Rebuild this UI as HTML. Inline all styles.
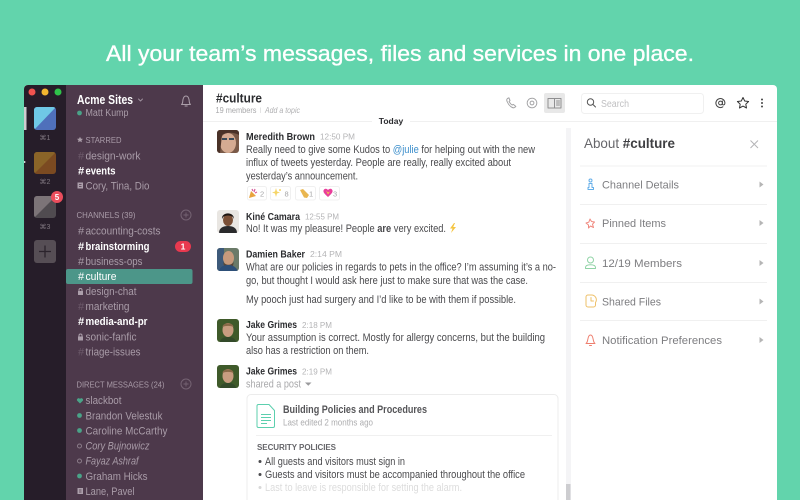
<!DOCTYPE html>
<html><head><meta charset="utf-8"><title>Slack</title>
<style>
html,body{margin:0;padding:0;width:800px;height:500px;overflow:hidden;background:#62d4ac}
svg{display:block;filter:blur(.3px)}
text{font-family:"Liberation Sans",sans-serif}
.h{font-size:22.500px;font-weight:400;fill:#fff;stroke:#fff;stroke-width:.35}
.s{font-size:11px;fill:#a99ca8}
.sb{font-size:11px;font-weight:700;fill:#fff}
.hd{font-size:8.500px;fill:#a99ba8}
.n{font-size:10.500px;font-weight:700;fill:#2c2d30}
.tm{font-size:8.500px;fill:#b4b4b6}
.b{font-size:11px;fill:#4a4a4d}
.r{font-size:11px;fill:#7d7d80}
.ar{fill:#b5b5b5}
.ln{stroke:#f0f0f0;stroke-width:1}
.ic{fill:none;stroke-width:1;stroke-linecap:round;stroke-linejoin:round}
</style></head><body>
<svg width="800" height="500" viewBox="0 0 800 500" xmlns="http://www.w3.org/2000/svg">
<defs>
<clipPath id="win"><path d="M28 85H773a4 4 0 0 1 4 4V500H24V89a4 4 0 0 1 4-4z"/></clipPath>
<clipPath id="av1"><rect x="217" y="130" width="22" height="23" rx="3"/></clipPath>
<clipPath id="av2"><rect x="217" y="210" width="22" height="23" rx="3"/></clipPath>
<clipPath id="av3"><rect x="217" y="248" width="22" height="23" rx="3"/></clipPath>
<clipPath id="av4"><rect x="217" y="319" width="22" height="23" rx="3"/></clipPath>
<clipPath id="av5"><rect x="217" y="365" width="22" height="23" rx="3"/></clipPath>
<clipPath id="t1"><rect x="34" y="107" width="22" height="23" rx="3"/></clipPath>
<clipPath id="t2"><rect x="34" y="152" width="22" height="22" rx="3"/></clipPath>
<clipPath id="t3"><rect x="34" y="196" width="22" height="22" rx="3"/></clipPath>
</defs>

<rect width="800" height="500" fill="#62d4ac"/>
<text class="h" x="106" y="61" textLength="588" lengthAdjust="spacingAndGlyphs">All your team’s messages, files and services in one place.</text>

<g clip-path="url(#win)">
<rect x="24" y="85" width="753" height="415" fill="#fff"/>
<rect x="24" y="85" width="42" height="415" fill="#261d29"/>
<rect x="66" y="85" width="137" height="415" fill="#4d394b"/>

<!-- traffic lights -->
<circle cx="32" cy="92" r="3.500" fill="#f0534f"/>
<circle cx="45" cy="92" r="3.500" fill="#f2b52f"/>
<circle cx="58" cy="92" r="3.500" fill="#2fc24a"/>

<!-- teams -->
<rect x="24" y="107" width="2.500" height="23" fill="#cfcbcf"/>
<g clip-path="url(#t1)"><rect x="34" y="107" width="22" height="23" fill="#4f70bb"/><path d="M34 107H56L34 130z" fill="#6fc8e6"/></g>
<text x="45" y="140" text-anchor="middle" font-size="7" fill="#7f767f">⌘1</text>
<g clip-path="url(#t2)"><rect x="34" y="152" width="22" height="22" fill="#7b4a21"/><path d="M34 152H56L34 174z" fill="#8a6428"/></g>
<text x="45" y="184" text-anchor="middle" font-size="7" fill="#7f767f">⌘2</text>
<circle cx="24.500" cy="162" r="1" fill="#ddd"/>
<g clip-path="url(#t3)"><rect x="34" y="196" width="22" height="22" fill="#504b50"/><path d="M34 196H56L34 218z" fill="#7c7478"/></g>
<circle cx="57" cy="197" r="6" fill="#eb4d5c"/>
<text x="57" y="200" text-anchor="middle" font-size="8" font-weight="700" fill="#fff">5</text>
<text x="45" y="229" text-anchor="middle" font-size="7" fill="#7f767f">⌘3</text>
<rect x="34" y="240" width="22" height="23" rx="3" fill="#564e55"/>
<path d="M45 245.500V257.500M39 251.500H51" stroke="#2b232c" stroke-width="1.300"/>

<!-- sidebar head -->
<text x="77" y="104" font-size="12.500" font-weight="700" fill="#fff" textLength="56" lengthAdjust="spacingAndGlyphs">Acme Sites</text>
<path d="M138.500 99l2 2 2-2" class="ic" stroke="#9d8f9c"/>
<circle cx="79.500" cy="113" r="2.400" fill="#4aa388"/>
<text class="s" x="85.500" y="116" style="font-size:10px" textLength="43" lengthAdjust="spacingAndGlyphs">Matt Kump</text>
<path d="M181.500 104.500c1.500-1 1-2.500 1.500-5 .4-2 1.500-3.500 3-3.500s2.600 1.500 3 3.500c.5 2.500 0 4 1.500 5zM185 106h2.200" class="ic" stroke="#ab9ea9"/>

<!-- starred -->
<path d="M80 136.700l.9 1.900 2.100.3-1.500 1.400.4 2-1.900-1-1.900 1 .4-2-1.500-1.400 2.100-.3z" fill="#ab9ea9"/>
<text class="hd" x="85.500" y="143" textLength="36" lengthAdjust="spacingAndGlyphs">STARRED</text>
<text class="s" x="78" y="159.500" style="fill:#6d5a6b">#</text>
<text class="s" x="85.500" y="159.500" textLength="55" lengthAdjust="spacingAndGlyphs">design-work</text>
<text class="sb" x="78" y="174.500">#</text>
<text class="sb" x="85.500" y="174.500" textLength="30" lengthAdjust="spacingAndGlyphs">events</text>
<rect x="77.500" y="182.500" width="5.500" height="6" fill="#ac9fab"/><path d="M79 184.500h2.500M79 186.500h2.500" stroke="#4d394b" stroke-width=".8"/>
<text class="s" x="85.500" y="189.500" textLength="64" lengthAdjust="spacingAndGlyphs">Cory, Tina, Dio</text>

<!-- channels -->
<text class="hd" x="76.500" y="218" textLength="59" lengthAdjust="spacingAndGlyphs">CHANNELS (39)</text>
<circle cx="186" cy="215" r="5" class="ic" stroke="#756373"/><path d="M186 212.500v5M183.500 215h5" stroke="#756373" stroke-width=".9"/>
<text class="s" x="78" y="234.500">#</text>
<text class="s" x="85.500" y="234.500" textLength="75" lengthAdjust="spacingAndGlyphs">accounting-costs</text>
<text class="sb" x="78" y="250">#</text>
<text class="sb" x="85.500" y="250" textLength="64" lengthAdjust="spacingAndGlyphs">brainstorming</text>
<rect x="175" y="241" width="16" height="11" rx="5.500" fill="#e8394f"/>
<text x="183" y="249.500" text-anchor="middle" font-size="8.500" font-weight="700" fill="#fff">1</text>
<text class="s" x="78" y="265">#</text>
<text class="s" x="85.500" y="265" textLength="57" lengthAdjust="spacingAndGlyphs">business-ops</text>
<rect x="66" y="269" width="126.500" height="15" rx="2" fill="#4c9689"/>
<text x="78" y="280" font-size="11" fill="#fff">#</text>
<text x="85.500" y="280" font-size="11" fill="#fff" textLength="31" lengthAdjust="spacingAndGlyphs">culture</text>
<rect x="78" y="291" width="5" height="4" fill="#ac9fab"/><path d="M79 291v-1a1.500 1.500 0 0 1 3 0v1" class="ic" stroke="#ac9fab" stroke-width=".7"/>
<text class="s" x="85.500" y="295" textLength="51" lengthAdjust="spacingAndGlyphs">design-chat</text>
<text class="s" x="78" y="310" style="fill:#6d5a6b">#</text>
<text class="s" x="85.500" y="310" textLength="44" lengthAdjust="spacingAndGlyphs">marketing</text>
<text class="sb" x="78" y="325">#</text>
<text class="sb" x="85.500" y="325" textLength="62" lengthAdjust="spacingAndGlyphs">media-and-pr</text>
<rect x="78" y="336.500" width="5" height="4" fill="#ac9fab"/><path d="M79 336.500v-1a1.500 1.500 0 0 1 3 0v1" class="ic" stroke="#ac9fab" stroke-width=".7"/>
<text class="s" x="85.500" y="340.500" textLength="51" lengthAdjust="spacingAndGlyphs">sonic-fanfic</text>
<text class="s" x="78" y="355.500" style="fill:#6d5a6b">#</text>
<text class="s" x="85.500" y="355.500" textLength="55" lengthAdjust="spacingAndGlyphs">triage-issues</text>

<!-- DMs -->
<text class="hd" x="76.500" y="387.500" textLength="88" lengthAdjust="spacingAndGlyphs">DIRECT MESSAGES (24)</text>
<circle cx="186" cy="384" r="5" class="ic" stroke="#756373"/><path d="M186 381.500v5M183.500 384h5" stroke="#756373" stroke-width=".9"/>
<path d="M80 403.500l-2.800-2.800a1.600 1.600 0 0 1 2.800-1.700 1.600 1.600 0 0 1 2.800 1.700z" fill="#4aa388"/>
<text class="s" x="85.500" y="404" textLength="36" lengthAdjust="spacingAndGlyphs">slackbot</text>
<circle cx="79.500" cy="415.500" r="2.400" fill="#4aa388"/>
<text class="s" x="85.500" y="419.500" textLength="77" lengthAdjust="spacingAndGlyphs">Brandon Velestuk</text>
<circle cx="79.500" cy="430.500" r="2.400" fill="#4aa388"/>
<text class="s" x="85.500" y="434.500" textLength="82" lengthAdjust="spacingAndGlyphs">Caroline McCarthy</text>
<circle cx="79.500" cy="446" r="2" class="ic" stroke="#8b7c89"/>
<text class="s" x="85.500" y="449.500" font-style="italic" textLength="64" lengthAdjust="spacingAndGlyphs">Cory Bujnowicz</text>
<circle cx="79.500" cy="461" r="2" class="ic" stroke="#8b7c89"/>
<text class="s" x="85.500" y="464.500" font-style="italic" textLength="53" lengthAdjust="spacingAndGlyphs">Fayaz Ashraf</text>
<circle cx="79.500" cy="476" r="2.400" fill="#4aa388"/>
<text class="s" x="85.500" y="480" textLength="62" lengthAdjust="spacingAndGlyphs">Graham Hicks</text>
<rect x="77.500" y="488" width="5.500" height="6" fill="#ac9fab"/><path d="M79 490h2.500M79 492h2.500" stroke="#4d394b" stroke-width=".8"/>
<text class="s" x="85.500" y="495" textLength="49" lengthAdjust="spacingAndGlyphs">Lane, Pavel</text>

<!-- main header -->
<text x="216" y="102.500" font-size="13" font-weight="700" fill="#2c2d30" textLength="46" lengthAdjust="spacingAndGlyphs">#culture</text>
<text x="215.500" y="113" font-size="8.500" fill="#a9a9ab" textLength="41" lengthAdjust="spacingAndGlyphs">19 members</text>
<path d="M260.500 107.500v5.500" stroke="#ddd" stroke-width=".8"/>
<text x="265" y="113" font-size="8.500" font-style="italic" fill="#b0b0b2" textLength="35" lengthAdjust="spacingAndGlyphs">Add a topic</text>
<line x1="203" y1="121.500" x2="777" y2="121.500" class="ln"/>
<rect x="372" y="114" width="38" height="13" fill="#fff"/>
<text x="391" y="124" text-anchor="middle" font-size="8.500" font-weight="700" fill="#2c2d30">Today</text>

<!-- header icons -->
<path d="M507.500 98.500c-.9.700-1 1.700-.4 3 .8 2 2.200 4 4 5.300 1.300.9 2.700 1.400 3.700.6l1-1-2.500-2-1.200.6c-1.200-.7-2.200-2-3-3.400l.9-1.100-1.100-2.700z" class="ic" stroke="#a3a3a5"/>
<circle cx="532" cy="103" r="4.800" class="ic" stroke="#a3a3a5" stroke-dasharray="2 .6"/><circle cx="532" cy="103" r="1.900" class="ic" stroke="#a3a3a5"/>
<rect x="544" y="93" width="21" height="20" rx="2" fill="#e8e8e8"/>
<rect x="548" y="98.500" width="13" height="9.500" class="ic" stroke="#8f8f91"/><path d="M554.500 98.500V108M556.500 101h3M556.500 103h3M556.500 105h3" class="ic" stroke="#8f8f91" stroke-width=".8"/>
<rect x="581.500" y="93.500" width="122" height="20" rx="3" fill="#fff" stroke="#f0f0f0"/>
<circle cx="590.500" cy="102" r="3.200" class="ic" stroke="#555" stroke-width="1.200"/><path d="M593 104.500l2.500 2.500" class="ic" stroke="#555" stroke-width="1.300"/>
<text x="601" y="107" font-size="10" fill="#c0c0c2" textLength="28" lengthAdjust="spacingAndGlyphs">Search</text>
<circle cx="720.500" cy="103" r="1.900" class="ic" stroke="#444" stroke-width="1.100"/>
<path d="M722.400 101v3c0 1.400 2.500 1.400 2.500-1a4.500 4.500 0 1 0-2 3.800" class="ic" stroke="#444" stroke-width="1.100"/>
<path d="M743 97.500l1.700 3.500 3.900.5-2.800 2.700.7 3.800-3.500-1.900-3.500 1.900.7-3.800-2.800-2.700 3.900-.5z" class="ic" stroke="#333" stroke-width="1.200"/>
<circle cx="762" cy="99.500" r="1" fill="#444"/><circle cx="762" cy="103" r="1" fill="#444"/><circle cx="762" cy="106.500" r="1" fill="#444"/>

<!-- scrollbar -->
<rect x="566" y="128" width="5" height="372" fill="#f4f4f6"/>
<rect x="566" y="484" width="4.500" height="16" fill="#cdcdd0"/>

<!-- msg 1 -->
<g clip-path="url(#av1)">
<rect x="217" y="130" width="22" height="23" fill="#7a5a48"/>
<ellipse cx="228" cy="143" rx="8" ry="10" fill="#d5ab92"/>
<path d="M217 130h22v5c-5-3-13-3-17 0l-2 18h-3z" fill="#4a3228"/>
<path d="M222 139h5M229 139h5" stroke="#3a4a58" stroke-width="2"/>
</g>
<text class="n" x="246" y="140" textLength="69" lengthAdjust="spacingAndGlyphs">Meredith Brown</text>
<text class="tm" x="320" y="139.500" textLength="35" lengthAdjust="spacingAndGlyphs">12:50 PM</text>
<text class="b" x="246" y="153" textLength="289" lengthAdjust="spacingAndGlyphs">Really need to give some Kudos to <tspan fill="#3b8ecb">@julie</tspan> for helping out with the new</text>
<text class="b" x="246" y="166" textLength="265" lengthAdjust="spacingAndGlyphs">influx of tweets yesterday. People are really, really excited about</text>
<text class="b" x="246" y="179.500" textLength="112" lengthAdjust="spacingAndGlyphs">yesterday’s announcement.</text>
<g>
<rect x="247.500" y="186.500" width="19" height="13.500" rx="2" fill="#fff" stroke="#f0f0f0"/>
<rect x="270.500" y="186.500" width="20" height="13.500" rx="2" fill="#fff" stroke="#f0f0f0"/>
<rect x="295.500" y="186.500" width="20" height="13.500" rx="2" fill="#fff" stroke="#f0f0f0"/>
<rect x="319.500" y="186.500" width="20" height="13.500" rx="2" fill="#fff" stroke="#f0f0f0"/>
<path d="M249 198l2-7 5 5z" fill="#e8a33d"/><path d="M252 189l1 2M255 189l-1 3M257 192l-2 1" stroke="#d65a9a" stroke-width="1.200"/>
<path d="M276 188l1 3.500 3 1-3 1-1 3.500-1-3.500-3-1 3-1z" fill="#f5d568"/><circle cx="280" cy="190" r="1" fill="#f5d568"/>
<path d="M300 190l3-1 6 6-2 3-3-.5z" fill="#e9b650"/>
<path d="M324 189.500c2-1.500 3-.5 4 .5 1-1 2.500-2 4-.5 1.500 2 0 4-4 7.500-4-3.500-5.500-5.500-4-7.500z" fill="#e83e9b"/><path d="M326 190.500l2 2 2-1-2 3z" fill="#f5c84a"/>
<text x="260" y="196.500" font-size="7.500" fill="#a5a5a7">2</text>
<text x="284.500" y="196.500" font-size="7.500" fill="#a5a5a7">8</text>
<text x="309" y="196.500" font-size="7.500" fill="#a5a5a7">1</text>
<text x="333" y="196.500" font-size="7.500" fill="#a5a5a7">3</text>
</g>

<!-- msg 2 -->
<g clip-path="url(#av2)">
<rect x="217" y="210" width="22" height="23" fill="#e9e6e2"/>
<ellipse cx="228" cy="220" rx="5" ry="6" fill="#7a4f36"/>
<path d="M222 219c-1-7 12-8 12 0l-1-2c-3-2-7-2-10 0z" fill="#1e1612"/>
<path d="M219 233c0-5 4-7 9-7s9 2 9 7z" fill="#2a2a2c"/>
</g>
<text class="n" x="246" y="220" textLength="54" lengthAdjust="spacingAndGlyphs">Kiné Camara</text>
<text class="tm" x="305" y="219.500" textLength="34" lengthAdjust="spacingAndGlyphs">12:55 PM</text>
<text class="b" x="246" y="232" textLength="200" lengthAdjust="spacingAndGlyphs">No! It was my pleasure! People <tspan font-weight="700">are</tspan> very excited.</text>
<path d="M454 223l-4 5.500h2.500l-1.500 4.500 5-6h-2.800l1.800-4z" fill="#f5c542"/>

<!-- msg 3 -->
<g clip-path="url(#av3)">
<rect x="217" y="248" width="22" height="23" fill="#6a7a68"/>
<rect x="217" y="248" width="7" height="23" fill="#3d5a7a"/>
<ellipse cx="228.500" cy="258" rx="5.500" ry="7" fill="#c79a7c"/>
<path d="M223 261c1 5 10 5 11 0l-1 5h-9z" fill="#5a4536"/>
<path d="M219 271c1-4 4-6 9-6s8 2 10 6z" fill="#2d4f78"/>
</g>
<text class="n" x="246" y="257.500" textLength="59" lengthAdjust="spacingAndGlyphs">Damien Baker</text>
<text class="tm" x="310" y="257" textLength="32" lengthAdjust="spacingAndGlyphs">2:14 PM</text>
<text class="b" x="246" y="270.500" textLength="310" lengthAdjust="spacingAndGlyphs">What are our policies in regards to pets in the office? I’m assuming it’s a no-</text>
<text class="b" x="246" y="284" textLength="282" lengthAdjust="spacingAndGlyphs">go, but thought I would ask here just to make sure that was the case.</text>
<text class="b" x="246" y="303" textLength="270" lengthAdjust="spacingAndGlyphs">My pooch just had surgery and I’d like to be with them if possible.</text>

<!-- msg 4 -->
<g clip-path="url(#av4)">
<rect x="217" y="319" width="22" height="23" fill="#3f5a2a"/>
<ellipse cx="228" cy="330" rx="5.500" ry="7" fill="#c89d80"/>
<path d="M222.500 327c0-5 11-5 11 0-3-1.500-8-1.500-11 0z" fill="#8a6a48"/>
<path d="M220 342c1-4 4-5 8-5s7 1 8 5z" fill="#334a2a"/>
</g>
<text class="n" x="246" y="328" textLength="51" lengthAdjust="spacingAndGlyphs">Jake Grimes</text>
<text class="tm" x="302" y="328" textLength="30" lengthAdjust="spacingAndGlyphs">2:18 PM</text>
<text class="b" x="246" y="341" textLength="299" lengthAdjust="spacingAndGlyphs">Your assumption is correct. Mostly for allergy concerns, but the building</text>
<text class="b" x="246" y="354" textLength="123" lengthAdjust="spacingAndGlyphs">also has a restriction on them.</text>

<!-- msg 5 -->
<g clip-path="url(#av5)">
<rect x="217" y="365" width="22" height="23" fill="#3f5a2a"/>
<ellipse cx="228" cy="376" rx="5.500" ry="7" fill="#c89d80"/>
<path d="M222.500 373c0-5 11-5 11 0-3-1.500-8-1.500-11 0z" fill="#8a6a48"/>
<path d="M220 388c1-4 4-5 8-5s7 1 8 5z" fill="#334a2a"/>
</g>
<text class="n" x="246" y="374.500" textLength="51" lengthAdjust="spacingAndGlyphs">Jake Grimes</text>
<text class="tm" x="302" y="374.500" textLength="30" lengthAdjust="spacingAndGlyphs">2:19 PM</text>
<text x="246" y="387.500" font-size="11" fill="#a9a9ab" textLength="55" lengthAdjust="spacingAndGlyphs">shared a post</text>
<path d="M305 382.500h6.500l-3.200 3.300z" fill="#9a9a9c"/>

<!-- post card -->
<rect x="247" y="394.500" width="311" height="120" rx="4" fill="#fff" stroke="#ececec"/>
<path d="M258.500 404.500h10.500l5.500 6v15.500a1.500 1.500 0 0 1-1.500 1.500h-14.500a1.500 1.500 0 0 1-1.500-1.500v-20a1.500 1.500 0 0 1 1.500-1.500z" class="ic" stroke="#5ccfae" stroke-width="1.200"/>
<path d="M261 414.500h10M261 417.500h10M261 420.500h10M261 423.500h6" stroke="#5ccfae" stroke-width="1"/>
<text x="283" y="413" font-size="11" font-weight="700" fill="#555558" textLength="144" lengthAdjust="spacingAndGlyphs">Building Policies and Procedures</text>
<text x="283" y="425.500" font-size="9" fill="#adadaf" textLength="90" lengthAdjust="spacingAndGlyphs">Last edited 2 months ago</text>
<line x1="256" y1="435.500" x2="552" y2="435.500" class="ln"/>
<text x="257" y="450" font-size="8" font-weight="700" fill="#66666a" textLength="79" lengthAdjust="spacing">SECURITY POLICIES</text>
<circle cx="260" cy="461.500" r="1.500" fill="#4a4a4d"/>
<text class="b" x="265" y="465" textLength="140" lengthAdjust="spacingAndGlyphs">All guests and visitors must sign in</text>
<circle cx="260" cy="474.500" r="1.500" fill="#4a4a4d"/>
<text class="b" x="265" y="478" textLength="260" lengthAdjust="spacingAndGlyphs">Guests and visitors must be accompanied throughout the office</text>
<circle cx="260" cy="487.500" r="1.500" fill="#d8d8d8"/>
<text class="b" x="265" y="491" style="fill:#dcdcdc" textLength="197" lengthAdjust="spacingAndGlyphs">Last to leave is responsible for setting the alarm.</text>

<!-- right panel -->
<text x="584" y="148" font-size="14" fill="#66666a" textLength="91" lengthAdjust="spacingAndGlyphs">About <tspan font-weight="700" fill="#3f3f42">#culture</tspan></text>
<path d="M750.500 140.500l7.500 7.500M758 140.500l-7.500 7.500" stroke="#b5b5b7" stroke-width="1"/>
<line x1="580" y1="166" x2="767" y2="166" class="ln"/>
<line x1="580" y1="204.500" x2="767" y2="204.500" class="ln"/>
<line x1="580" y1="243.500" x2="767" y2="243.500" class="ln"/>
<line x1="580" y1="282.500" x2="767" y2="282.500" class="ln"/>
<line x1="580" y1="320.500" x2="767" y2="320.500" class="ln"/>

<circle cx="590.500" cy="180.500" r="1.500" class="ic" stroke="#63aee8"/>
<path d="M589 183.500h3v4h1.500v2h-5.500v-2h1z" class="ic" stroke="#63aee8"/>
<text class="r" x="602" y="188.500" textLength="77" lengthAdjust="spacingAndGlyphs">Channel Details</text>
<path d="M759.500 181.500l4 3-4 3z" class="ar"/>

<path d="M590 219l1.500 2.500 3 .5-2 2.200 1 3.300-3-1.500-2 2 0-3-2.500-2 2.800-.8z" class="ic" stroke="#f08a80"/>
<text class="r" x="602" y="227" textLength="64" lengthAdjust="spacingAndGlyphs">Pinned Items</text>
<path d="M759.500 220l4 3-4 3z" class="ar"/>

<circle cx="590.500" cy="260" r="3" class="ic" stroke="#8fd3a5"/>
<path d="M585.500 268.500v-1c0-2 2-2.800 5-2.800s5 .8 5 2.800v1z" class="ic" stroke="#8fd3a5"/>
<text class="r" x="602" y="267" textLength="80" lengthAdjust="spacingAndGlyphs">12/19 Members</text>
<path d="M759.500 260l4 3-4 3z" class="ar"/>

<path d="M586 297a2 2 0 0 1 2-2h3.500a4.800 4.800 0 0 1 4 7.500v2.500a2 2 0 0 1-2 2h-5.500a2 2 0 0 1-2-2z" class="ic" stroke="#eec06a" stroke-width="1.200"/>
<path d="M591 297.500v3.500h2.500" class="ic" stroke="#eec06a"/>
<text class="r" x="602" y="305.500" textLength="59" lengthAdjust="spacingAndGlyphs">Shared Files</text>
<path d="M759.500 298.500l4 3-4 3z" class="ar"/>

<path d="M586 343.500c1.500-1 1.500-3 2-5 .4-2 1.300-3.500 2.500-3.500s2.100 1.500 2.500 3.500c.5 2 .5 4 2 5zM589.500 345.500h2" class="ic" stroke="#ee7f6f" stroke-width="1.100"/>
<text class="r" x="602" y="344" textLength="120" lengthAdjust="spacingAndGlyphs">Notification Preferences</text>
<path d="M759.500 337l4 3-4 3z" class="ar"/>
</g>
</svg>
</body></html>
